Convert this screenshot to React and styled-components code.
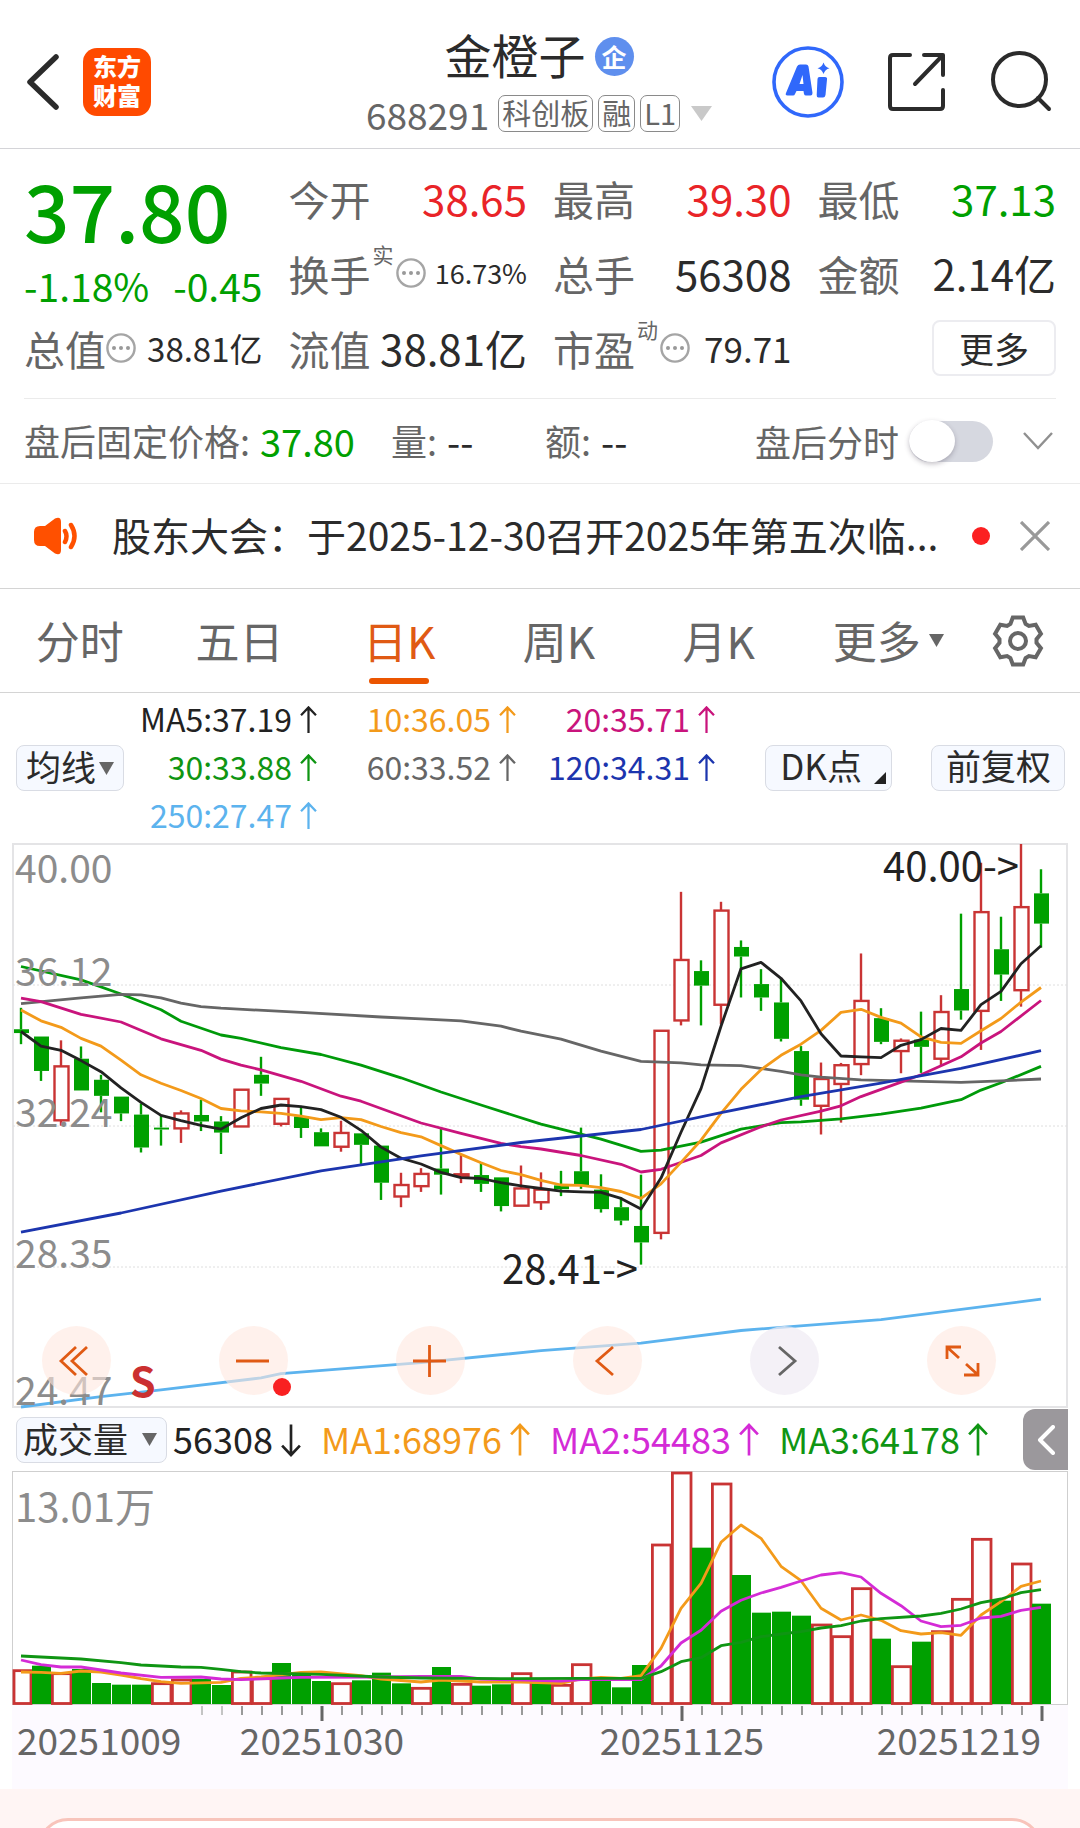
import React from 'react';
import styled, { createGlobalStyle } from 'styled-components';

const GREEN = '#00a000';
const RED = '#e92428';
const ORANGE = '#eb5500';
const INK = '#2b2b2b';
const GREY = '#666666';
const FONT = '"Noto Sans CJK SC", "Noto Sans", sans-serif';

const GlobalStyle = createGlobalStyle`
  *, *::before, *::after { box-sizing: border-box; }
  body { margin: 0; background: #fff; color: ${INK}; font-family: ${FONT}; }
  button, select, input { font: inherit; color: inherit; margin: 0; }
  svg { display: block; }
`;

const Page = styled.main`
  width: 100%;
  overflow: hidden;
`;

/* ---------- header ---------- */
const Header = styled.header`
  display: grid;
  grid-template-columns: 1fr auto 1fr;
  align-items: center;
  height: 149px;
  padding: 15px 28px 0 26px;
  border-bottom: 1px solid #d4d4d8;
`;
const HeaderSide = styled.div`
  display: flex;
  align-items: center;
  justify-content: ${(p) => (p.$end ? 'flex-end' : 'flex-start')};
  gap: ${(p) => (p.$end ? 44 : 24)}px;
`;
const IconButton = styled.button`
  display: flex;
  flex: none;
  padding: 0;
  border: 0;
  background: none;
  color: ${(p) => p.$color || INK};
`;
const Logo = styled.a`
  display: grid;
  place-content: center;
  width: 68px;
  height: 68px;
  padding-bottom: 4px;
  border-radius: 14px;
  background: #ff4a00;
  color: #fff;
  font-size: 24px;
  font-weight: 900;
  line-height: 29px;
  text-align: center;
  text-decoration: none;
`;
const TitleBlock = styled.div`
  display: flex;
  flex-direction: column;
  align-items: center;
  gap: 14px;
`;
const TitleRow = styled.div`
  display: flex;
  align-items: center;
  gap: 9px;
  height: 50px;
`;
const Title = styled.h1`
  margin: 0;
  padding-bottom: 4px;
  font-size: 47px;
  font-weight: 400;
  line-height: 48px;
`;
const Badge = styled.span`
  display: grid;
  place-content: center;
  width: 39px;
  height: 39px;
  border-radius: 50%;
  background: #5f8fee;
  color: #fff;
  font-size: 25px;
  font-weight: 700;
  line-height: 36px;
`;
const CodeRow = styled.div`
  display: flex;
  align-items: center;
  gap: 5px;
  color: ${GREY};
  line-height: 36px;
`;
const Code = styled.span`
  margin-right: 4px;
  font-size: 37px;
`;
const Tag = styled.span`
  height: 37px;
  padding: 0 3px;
  border: 1px solid #8a8a8a;
  border-radius: 7px;
  font-size: 29px;
  line-height: 32px;
`;
const CodeMenu = styled(IconButton)`
  margin-left: 6px;
`;

/* ---------- quote ---------- */
const Quote = styled.section`
  display: grid;
  grid-template-columns: repeat(4, minmax(0, 1fr));
  grid-auto-rows: 75px;
  column-gap: 26px;
  margin: 0 24px;
  padding: 11px 0 13px;
  border-bottom: 1px solid #ebebeb;
`;
const PriceCell = styled.div`
  grid-row: span 2;
  color: ${GREEN};
`;
const Price = styled.div`
  font-size: 80px;
  font-weight: 500;
  line-height: 96px;
`;
const Changes = styled.div`
  display: flex;
  justify-content: space-between;
  font-size: 39px;
  line-height: 58px;
`;
const Cell = styled.div`
  display: flex;
  align-items: center;
  white-space: nowrap;
`;
const CellLabel = styled.span`
  color: ${GREY};
  font-size: 41px;
`;
const Sup = styled.sup`
  align-self: flex-start;
  padding: 4px 2px 0;
  color: ${GREY};
  font-size: 21px;
  line-height: 30px;
`;
const CellValue = styled.span`
  margin-left: auto;
  color: ${(p) => p.$color || INK};
  font-size: ${(p) => p.$size || 42}px;
`;
const MoreButton = styled.button`
  width: 124px;
  height: 56px;
  margin-left: auto;
  padding: 0;
  border: 2px solid #ececf0;
  border-radius: 8px;
  background: #fff;
  font-size: 35px;
  line-height: 48px;
`;

/* ---------- after hours ---------- */
const AfterHours = styled.section`
  display: flex;
  align-items: center;
  gap: 36px;
  height: 85px;
  padding: 0 26px 0 24px;
  border-bottom: 1px solid #ebebeb;
  color: ${GREY};
  font-size: 36px;
  white-space: nowrap;
`;
const AfterItem = styled.div`
  display: flex;
  align-items: center;
  gap: 10px;
  min-width: 118px;
  padding-bottom: 2px;
`;
const AfterValue = styled.span`
  color: ${(p) => p.$color || INK};
  font-size: 38px;
`;
const AfterTools = styled.div`
  display: flex;
  align-items: center;
  gap: 29px;
  margin-left: auto;
`;
const SwitchLabel = styled.label`
  display: flex;
  align-items: center;
  gap: 10px;
`;
const Switch = styled.input`
  appearance: none;
  display: flex;
  align-items: center;
  width: 84px;
  height: 41px;
  border-radius: 21px;
  background: #d6d8e0;
  &::before {
    content: '';
    width: 46px;
    height: 42px;
    border-radius: 50%;
    background: #fff;
    box-shadow: 0 2px 5px rgba(60, 50, 70, 0.3);
  }
  &:checked { justify-content: flex-end; background: ${ORANGE}; }
`;

/* ---------- notice ---------- */
const Notice = styled.section`
  display: flex;
  align-items: center;
  height: 105px;
  padding: 0 30px 0 33px;
  border-bottom: 1px solid #d4d4d4;
`;
const NoticeText = styled.a`
  flex: 1;
  min-width: 0;
  margin-left: 34px;
  padding-bottom: 5px;
  overflow: hidden;
  color: ${INK};
  font-size: 39px;
  text-decoration: none;
  white-space: nowrap;
`;
const NoticeDot = styled.i`
  width: 18px;
  height: 18px;
  margin: 0 30px 0 16px;
  border-radius: 50%;
  background: #fb2021;
`;

/* ---------- tabs ---------- */
const Tabs = styled.nav`
  display: flex;
  height: 104px;
  padding-right: 22px;
  border-bottom: 1px solid #d4d4d4;
`;
const Tab = styled.button`
  display: flex;
  flex: ${(p) => (p.$wide ? 18 : 16)} 1 0;
  flex-direction: column;
  align-items: center;
  justify-content: space-between;
  padding: 15px 0 8px;
  border: 0;
  background: none;
  color: ${(p) => (p.$active ? '#e05a14' : GREY)};
  font-size: 44px;
  line-height: 72px;
  white-space: nowrap;
  &::after {
    content: '';
    width: 60px;
    height: 6px;
    border-radius: 3px;
    background: ${(p) => (p.$active ? ORANGE : 'transparent')};
  }
`;
const TabText = styled.span`
  display: flex;
  align-items: center;
  gap: 8px;
`;
const TabSettings = styled(IconButton)`
  flex: 8 1 0;
  align-items: center;
  justify-content: center;
`;

/* ---------- moving averages ---------- */
const AverageBar = styled.section`
  display: flex;
  align-items: center;
  height: 150px;
  padding: 0 15px 0 16px;
`;
const Picker = styled.div`
  display: grid;
  flex: none;
  align-items: center;
  width: ${(p) => p.$width}px;
  height: 46px;
  border: 1px solid #d9dce4;
  border-radius: 8px;
  background: #f6f9ff;
  > * { grid-area: 1 / 1; }
  > svg { justify-self: end; margin-right: 9px; pointer-events: none; }
`;
const PickerSelect = styled.select`
  appearance: none;
  width: 100%;
  height: 44px;
  padding: 0 0 4px ${(p) => p.$pad}px;
  border: 0;
  background: none;
  font-size: 35px;
  line-height: 38px;
`;
const Averages = styled.div`
  display: grid;
  grid-template-columns: repeat(3, 199px);
  grid-auto-rows: 48px;
  align-items: center;
  justify-items: end;
  margin-left: -6px;
`;
const Average = styled.span`
  display: flex;
  align-items: center;
  gap: 8px;
  color: ${(p) => p.$color};
  font-size: ${(p) => p.$size || 32}px;
  line-height: 40px;
  white-space: nowrap;
`;
const AverageText = styled.span`
  padding-bottom: 4px;
`;
const ToolButtons = styled.div`
  display: flex;
  gap: 39px;
  margin-left: auto;
`;
const ToolButton = styled.button`
  display: flex;
  align-items: flex-end;
  justify-content: center;
  gap: 12px;
  height: 46px;
  padding: 0 ${(p) => p.$right || 13}px 6px 14px;
  border: 1px solid #d9dce4;
  border-radius: 8px;
  background: #f6f9ff;
  font-size: 35px;
  line-height: 38px;
`;

/* ---------- charts ---------- */
const ChartPanel = styled.section`
  position: relative;
  margin: 0 12px;
`;
const Plot = styled.svg`
  width: 100%;
  height: auto;
  overflow: visible;
  font-family: ${FONT};
`;
const Controls = styled.div`
  position: absolute;
  left: 2.8%;
  right: 6.8%;
  bottom: 13px;
  display: flex;
  justify-content: space-between;
`;
const RoundButton = styled.button`
  display: grid;
  place-items: center;
  width: 69px;
  height: 69px;
  padding: 0;
  border: 0;
  border-radius: 50%;
  background: ${(p) => (p.$muted ? 'rgba(240, 235, 243, 0.7)' : 'rgba(255, 232, 224, 0.6)')};
  color: ${(p) => (p.$muted ? '#666' : '#e05a14')};
`;
const EventDot = styled.i`
  position: absolute;
  left: 24.7%;
  bottom: 12px;
  width: 18px;
  height: 18px;
  border-radius: 50%;
  background: #f92021;
`;
const VolumeBar = styled.div`
  display: flex;
  align-items: center;
  height: 63px;
  padding: 0 12px 0 16px;
`;
const VolumeValues = styled.div`
  display: flex;
  gap: 20px;
  margin-left: 6px;
`;
const SideTab = styled.button`
  display: grid;
  place-items: center;
  width: 45px;
  height: 61px;
  margin-left: auto;
  padding: 0;
  border: 0;
  border-radius: 12px 0 0 12px;
  background: #9b989c;
  color: #fff;
`;
const Bottom = styled.footer`
  height: 39px;
  padding: 29px 38px 0;
  overflow: hidden;
  background: #fff5f4;
`;
const BottomCard = styled.div`
  height: 70px;
  border: 3px solid #f8c4bb;
  border-radius: 30px;
  background: #fff;
`;

/* ---------- icons ---------- */
const Triangle = ({ width = 15, height = 13, color = GREY }) => (
  <svg width={width} height={height} viewBox="0 0 15 13" preserveAspectRatio="none" aria-hidden="true">
    <path d="M0 0H15L7.5 13Z" fill={color} />
  </svg>
);
const Arrow = ({ down, size = 28 }) => (
  <svg width={size > 30 ? 20 : 17} height={size} viewBox="0 0 18 30" fill="none" stroke="currentColor" strokeWidth="2.4" aria-hidden="true">
    <path d={down ? 'M9 1V28M1 20L9 28.500L17 20' : 'M9 29V2M1 10L9 1.500L17 10'} />
  </svg>
);
const Dots = () => (
  <svg width="30" height="30" viewBox="0 0 30 30" aria-hidden="true">
    <circle cx="15" cy="15" r="13.6" fill="none" stroke="#a5a5a5" strokeWidth="2.4" />
    {[8, 15, 22].map((x) => <circle key={x} cx={x} cy="15" r="2" fill="#999" />)}
  </svg>
);
const Gear = () => {
  const pts = [];
  for (let k = 0; k < 6; k += 1) {
    const base = -90 + k * 60;
    [[-24, 18.6], [-12.5, 24], [12.5, 24], [24, 18.6]].forEach(([d, r]) => {
      const a = ((base + d) * Math.PI) / 180;
      pts.push(`${(27 + r * Math.cos(a)).toFixed(1)},${(27 + r * Math.sin(a)).toFixed(1)}`);
    });
  }
  return (
    <svg width="54" height="54" viewBox="0 0 54 54" fill="none" stroke="#666" strokeWidth="4" aria-hidden="true">
      <polygon points={pts.join(' ')} />
      <circle cx="27" cy="27" r="8" />
    </svg>
  );
};

/* ---------- chart data: levels are in plot units, measured down from the top ---------- */
const CANDLES = [
  'g 518 528 462 557', 'g 537 627 537 653', 'r 615 756 547 770', 'g 595 678 563 678', 'g 650 692 637 735',
  'g 694 738 694 758', 'g 741 827 712 840', 'g 775 780 742 822', 'r 738 777 730 815', 'g 742 759 702 784',
  'g 759 788 745 844', 'r 676 772 676 772', 'g 637 660 590 692', 'r 700 765 700 772', 'g 746 776 722 802',
  'g 787 824 777 824', 'r 789 825 757 838', 'g 790 820 790 870', 'g 822 919 822 964', 'r 925 955 893 983',
  'r 896 928 881 943', 'g 882 898 775 950', 'r 897 901 845 920', 'g 899 922 868 943', 'g 905 980 905 994',
  'r 934 979 874 979', 'r 937 970 892 990', 'g 926 936 888 954', 'g 889 926 775 935', 'g 937 988 897 997',
  'g 983 1018 957 1030', 'g 1032 1075 898 1133', 'r 522 1050 522 1067', 'r 337 495 159 508', 'g 366 404 338 508',
  'r 208 454 185 505', 'g 303 328 286 435', 'g 400 435 361 470', 'g 448 543 385 550', 'g 575 702 562 718',
  'r 648 718 605 793', 'r 612 661 606 762', 'r 444 609 320 638', 'g 489 551 463 557', 'r 548 575 542 633',
  'g 545 564 472 632', 'r 473 595 429 612', 'g 413 469 216 493', 'r 212 470 83 572', 'g 309 375 224 444',
  'r 199 416 34 459', 'g 163 242 100 305',
].map((row) => {
  const [kind, ...v] = row.split(' ');
  const [top, bottom, high, low] = v.map(Number);
  return { up: kind === 'r', top, bottom, high, low };
});

const PRICE_LINES = [
  ['#5cb3ee', '0:1505 4:1478 7:1460 12:1429 13:1418 20:1389 26:1358 31:1338 36:1305 38:1297 43:1277 51:1223'],
  ['#009a0a', '0:354 3:389 5:426 7:467 8:497 10:533 11:542 13:566 15:584 17:612 19:645 21:682 23:716 26:766 29:805 31:837 32:834 34:813 36:779 38:762 39:760 41:752 43:740 45:724 47:702 48:677 49:658 51:615'],
  ['#666666', '0:451 3:436 5:427 6:428 7:436 8:450 9:459 10:463 14:474 18:486 20:491 22:496 24:510 25:523 27:544 29:575 31:602 33:606 34:611 36:613 38:628 39:637 40:643 42:650 44:653 47:657 49:653 51:648'],
  ['#c9147c', '0:437 1:446 3:479 5:499 7:543 9:573 10:596 11:612 12:624 14:654 16:693 17:706 19:744 20:763 22:790 24:816 25:825 26:831 28:848 30:871 31:891 32:884 34:848 35:815 37:773 38:755 40:732 41:718 42:694 44:656 45:637 47:590 48:554 49:524 51:443'],
  ['#f39a1a', '0:468 1:496 2:513 3:542 4:562 5:599 6:637 7:659 8:678 9:699 10:725 11:731 12:734 13:738 14:745 15:754 16:749 17:754 18:772 19:788 20:799 21:822 22:845 23:867 24:887 25:898 26:913 27:925 28:926 29:932 30:942 31:960 32:922 33:866 34:808 35:738 36:675 37:624 38:586 39:557 40:521 41:474 42:466 43:487 44:502 45:538 46:552 47:555 48:522 49:490 50:447 51:409'],
  ['#222222', '0:524 1:562 2:573 3:600 4:629 5:671 6:709 7:743 8:757 9:769 10:779 11:749 12:725 13:716 14:720 15:728 16:748 17:782 18:826 19:855 20:870 21:892 22:906 23:908 24:919 25:927 26:934 27:941 28:943 29:944 30:960 31:988 32:907 33:787 34:673 35:510 36:360 37:343 38:385 39:444 40:530 41:588 42:590 43:592 44:560 45:545 46:516 47:521 48:454 49:419 50:347 51:300'],
  ['#1c35ae', '0:1048 5:998 10:941 15:888 20:849 25:814 28:797 31:780 35:736 39:694 43:659 47:620 51:574'],
];

const VOLUMES = 'r804 g792 r813 g802 g844 g849 g849 r843 r832 g832 g850 r808 r828 g784 g812 g838 r843 g836 g813 g845 r857 g796 r845 g852 g848 r813 g845 r848 r786 g836 g857 g790 r427 r211 g438 r244 g520 g633 g630 g642 r667 r702 r558 g711 r792 g720 r687 r590 r410 g597 r484 g606'
  .split(' ')
  .map((v) => ({ up: v[0] === 'r', top: Number(v.slice(1)) }));

const VOLUME_LINES = [
  ['#f39a1a', '0:811 1:812 2:815 3:808 4:811 5:820 6:831 7:840 8:845 10:842 11:830 12:826 14:812 15:811 17:822 18:832 20:841 21:835 23:841 25:841 27:845 28:832 29:827 30:830 31:822 32:740 33:620 34:545 35:422 36:370 37:410 38:494 39:537 40:620 41:655 42:640 43:656 44:687 45:697 46:693 47:701 48:640 49:600 50:554 51:538'],
  ['#d42bd6', '0:775 1:789 2:796 3:796 5:814 7:827 9:826 10:832 11:834 13:829 14:827 18:826 20:824 22:824 23:832 27:838 28:834 31:834 32:793 33:724 34:686 35:629 36:596 37:574 38:557 39:538 40:520 41:513 42:526 43:575 44:612 45:658 46:675 47:671 48:649 49:644 50:626 51:617'],
  ['#0f9513', '0:763 3:772 5:783 6:790 8:796 9:797 10:803 11:810 12:814 15:818 18:826 20:829 24:831 28:830 31:830 32:810 33:780 34:768 35:732 36:722 37:705 38:697 39:690 40:679 41:672 42:658 43:651 45:643 46:635 47:622 48:603 49:592 50:573 51:564'],
];

const cx = (i) => 9 + i * 20;
const priceY = (v) => ((v - 34) * 563) / 1471 + 1;
const volumeY = (v) => (v - 211) / 3 + 1;
const toPoints = (text, scale) =>
  text
    .split(' ')
    .map((pair) => pair.split(':').map(Number))
    .map(([i, v]) => `${cx(i)},${scale(v).toFixed(1)}`)
    .join(' ');

const BAR_RED = '#c93434';

function PriceChart() {
  return (
    <Plot viewBox="0 0 1056 565" role="img" aria-label="日K">
      <rect x="1" y="1" width="1054" height="563" fill="none" stroke="#e4e4e6" strokeWidth="2" />
      {[142, 283, 424].map((y) => (
        <line key={y} x1="1" x2="1055" y1={y} y2={y} stroke="#dedede" strokeWidth="1" strokeDasharray="2 2" />
      ))}
      {CANDLES.map((c, i) => {
        const x = cx(i);
        const color = c.up ? BAR_RED : GREEN;
        return (
          <g key={i} stroke={color} strokeWidth="2.4">
            <line x1={x} x2={x} y1={priceY(c.high)} y2={priceY(c.top)} />
            <line x1={x} x2={x} y1={priceY(c.bottom)} y2={priceY(c.low)} />
            {c.up ? (
              <rect x={x - 6.5} y={priceY(c.top)} width="14" height={priceY(c.bottom) - priceY(c.top)} fill="#fff" />
            ) : (
              <rect x={x - 7} y={priceY(c.top)} width="15" height={priceY(c.bottom) - priceY(c.top)} fill={GREEN} stroke="none" />
            )}
          </g>
        );
      })}
      {PRICE_LINES.map(([color, text]) => (
        <polyline key={color} points={toPoints(text, priceY)} fill="none" stroke={color} strokeWidth="2.8" strokeLinejoin="round" />
      ))}
      <g fontSize="39" fill="#8c8c8c">
        <text x="3" y="40">40.00</text>
        <text x="3" y="143">36.12</text>
        <text x="3" y="284">32.24</text>
        <text x="3" y="425">28.35</text>
        <text x="3" y="562">24.47</text>
      </g>
      <g fontSize="40" fill="#222" textAnchor="end">
        <text x="1007" y="38">40.00-&gt;</text>
        <text x="626" y="441">28.41-&gt;</text>
      </g>
      <text x="118" y="554" fontSize="41" fontWeight="700" fill="#cb3030">S</text>
    </Plot>
  );
}

function VolumeChart() {
  return (
    <Plot viewBox="0 0 1056 318" role="img" aria-label="成交量">
      <rect x="0" y="234" width="1056" height="84" fill="#fdfaff" />
      <rect x="0.5" y="0.5" width="1055" height="233" fill="#fff" stroke="#cfcfcf" />
      {VOLUMES.map((b, i) => {
        const right = cx(i) + 10;
        const left = Math.max(cx(i) - 8.6, 2);
        const y = volumeY(b.top);
        return b.up ? (
          <rect key={i} x={left} y={y + 1} width={right - left} height={231.5 - y} fill="#fff" stroke={BAR_RED} strokeWidth="2.8" />
        ) : (
          <rect key={i} x={right - 19} y={y} width="19" height={233 - y} fill={GREEN} />
        );
      })}
      {VOLUME_LINES.map(([color, text]) => (
        <polyline key={color} points={toPoints(text, volumeY)} fill="none" stroke={color} strokeWidth="2.8" strokeLinejoin="round" />
      ))}
      {VOLUMES.map((_, i) => {
        if (i < 9) return null;
        const major = i === 15 || i === 33 || i === 51;
        return (
          <line
            key={i}
            x1={cx(i) + 1}
            x2={cx(i) + 1}
            y1="235"
            y2={major ? 250 : 244}
            stroke={i < 11 ? '#c4c4c4' : major ? '#666' : '#999'}
            strokeWidth={major ? 3 : 2}
          />
        );
      })}
      <text x="3" y="51" fontSize="40" fill="#8c8c8c">13.01万</text>
      <g fontSize="37" fill={GREY}>
        <text x="5" y="284">20251009</text>
        <text x="310" y="284" textAnchor="middle">20251030</text>
        <text x="670" y="284" textAnchor="middle">20251125</text>
        <text x="1029" y="284" textAnchor="end">20251219</text>
      </g>
    </Plot>
  );
}

const CONTROLS = [
  ['最早', <path key="p" d="M18 4L3 18L18 32M29 4L14 18L29 32" />],
  ['缩小', <path key="p" d="M1 18H34" />],
  ['放大', <path key="p" d="M1 18H34M17.500 2V34" />],
  ['左移', <path key="p" d="M24 4L8 18L24 32" />],
  ['右移', <path key="p" d="M12 4L28 18L12 32" />],
  ['全屏', <path key="p" d="M3 16V4H17M4 5L15 15M34 20V32H20M33 31L22 21" />],
];

const AVERAGES = [
  ['MA5:37.19', '#222'], ['10:36.05', '#f39a1a'], ['20:35.71', '#c9147c'],
  ['30:33.88', '#0f9513'], ['60:33.52', '#666'], ['120:34.31', '#1c35ae'],
  ['250:27.47', '#5cb3ee'],
];

const VOLUME_AVERAGES = [
  ['56308', '#222', true], ['MA1:68976', '#f39a1a'], ['MA2:54483', '#d42bd6'], ['MA3:64178', '#0f9513'],
];

const TABS = ['分时', '五日', '日K', '周K', '月K', '更多'];

export default function App() {
  return (
    <Page>
      <GlobalStyle />
      <Header>
        <HeaderSide>
          <IconButton aria-label="返回">
            <svg width="33" height="56" viewBox="0 0 33 56" fill="none" stroke="currentColor" strokeWidth="5.500" strokeLinecap="round" strokeLinejoin="round">
              <path d="M30 3L4 28L30 53" />
            </svg>
          </IconButton>
          <Logo href="#home">
            <span>东方</span>
            <span>财富</span>
          </Logo>
        </HeaderSide>
        <TitleBlock>
          <TitleRow>
            <Title>金橙子</Title>
            <Badge>企</Badge>
          </TitleRow>
          <CodeRow>
            <Code>688291</Code>
            <Tag>科创板</Tag>
            <Tag>融</Tag>
            <Tag>L1</Tag>
            <CodeMenu aria-label="展开">
              <Triangle width={21} height={15} color="#c9c9c9" />
            </CodeMenu>
          </CodeRow>
        </TitleBlock>
        <HeaderSide $end>
          <IconButton aria-label="Ai" $color="#3068fb">
            <svg width="72" height="72" viewBox="0 0 72 72" fill="none" stroke="currentColor">
              <circle cx="36" cy="36" r="34" strokeWidth="3.6" />
              <path fillRule="evenodd" d="M25 20.500Q26 18.500 28 18.500H34Q36 18.500 36.500 20.500L40.500 47Q40.500 49.500 38.500 49.500H34Q32.500 49.500 32 48L31.500 45H24.500L23 48Q22.500 49.500 21 49.500H15.500Q13 49.500 14 47ZM30.500 29L27.500 38H31.500Z" fill="currentColor" stroke="none" />
              <path d="M47.500 31H53Q55.500 31 55 33.500L53.500 49Q53 51.500 51 51.500H46.500Q44.500 51.500 44.700 49L45.500 33Q45.500 31 47.500 31Z" fill="currentColor" stroke="none" />
              <path d="M51.500 16.500Q53 21 57.500 22.300Q53 23.500 51.500 28Q50 23.500 45.500 22.300Q50 21 51.500 16.500Z" fill="currentColor" stroke="none" />
            </svg>
          </IconButton>
          <IconButton aria-label="分享">
            <svg width="58" height="60" viewBox="0 0 58 60" fill="none" stroke="currentColor" strokeWidth="4" strokeLinecap="round" strokeLinejoin="round">
              <path d="M22 3H5Q2 3 2 6V54Q2 57 5 57H52Q55 57 55 54V38M36 3H55V23M54 4L27 32" />
            </svg>
          </IconButton>
          <IconButton aria-label="搜索">
            <svg width="62" height="62" viewBox="0 0 62 62" fill="none" stroke="currentColor" strokeWidth="4" strokeLinecap="round">
              <circle cx="29.500" cy="28.500" r="26.500" />
              <path d="M48 47L59 58" />
            </svg>
          </IconButton>
        </HeaderSide>
      </Header>

      <Quote>
        <PriceCell>
          <Price>37.80</Price>
          <Changes>
            <span>-1.18%</span>
            <span>-0.45</span>
          </Changes>
        </PriceCell>
        <Cell><CellLabel>今开</CellLabel><CellValue $color={RED}>38.65</CellValue></Cell>
        <Cell><CellLabel>最高</CellLabel><CellValue $color={RED}>39.30</CellValue></Cell>
        <Cell><CellLabel>最低</CellLabel><CellValue $color={GREEN}>37.13</CellValue></Cell>
        <Cell><CellLabel>换手</CellLabel><Sup>实</Sup><Dots /><CellValue $size={27}>16.73%</CellValue></Cell>
        <Cell><CellLabel>总手</CellLabel><CellValue>56308</CellValue></Cell>
        <Cell><CellLabel>金额</CellLabel><CellValue>2.14亿</CellValue></Cell>
        <Cell><CellLabel>总值</CellLabel><Dots /><CellValue $size={33}>38.81亿</CellValue></Cell>
        <Cell><CellLabel>流值</CellLabel><CellValue>38.81亿</CellValue></Cell>
        <Cell><CellLabel>市盈</CellLabel><Sup>动</Sup><Dots /><CellValue $size={35}>79.71</CellValue></Cell>
        <Cell><MoreButton>更多</MoreButton></Cell>
      </Quote>

      <AfterHours>
        <AfterItem>盘后固定价格: <AfterValue $color={GREEN}>37.80</AfterValue></AfterItem>
        <AfterItem>量: <AfterValue>--</AfterValue></AfterItem>
        <AfterItem>额: <AfterValue>--</AfterValue></AfterItem>
        <AfterTools>
          <SwitchLabel>
            盘后分时
            <Switch type="checkbox" role="switch" />
          </SwitchLabel>
          <IconButton aria-label="展开盘后" $color="#909090">
            <svg width="32" height="20" viewBox="0 0 32 20" fill="none" stroke="currentColor" strokeWidth="2.4">
              <path d="M2 2L16 17L30 2" />
            </svg>
          </IconButton>
        </AfterTools>
      </AfterHours>

      <Notice>
        <svg width="45" height="38" viewBox="0 0 45 38" fill="none" stroke="#ff5000" strokeWidth="4.500" strokeLinecap="round" aria-hidden="true">
          <path d="M7 9H12L22 1.500Q28 -1 28 5V33Q28 39 22 36.500L12 29H7Q1 29 1 23V15Q1 9 7 9Z" fill="#ff5000" stroke="none" />
          <path d="M32 14Q35 19 32 25M38 8Q45 19 38 30" />
        </svg>
        <NoticeText href="#notice">股东大会：于2025-12-30召开2025年第五次临...</NoticeText>
        <NoticeDot />
        <IconButton aria-label="关闭" $color="#999">
          <svg width="30" height="30" viewBox="0 0 30 30" fill="none" stroke="currentColor" strokeWidth="3.200">
            <path d="M1 1L29 29M29 1L1 29" />
          </svg>
        </IconButton>
      </Notice>

      <Tabs>
        {TABS.map((name) => (
          <Tab key={name} $active={name === '日K'} $wide={name === '更多'}>
            <TabText>
              {name}
              {name === '更多' && <Triangle />}
            </TabText>
          </Tab>
        ))}
        <TabSettings aria-label="设置"><Gear /></TabSettings>
      </Tabs>

      <AverageBar>
        <Picker $width={108}>
          <PickerSelect aria-label="主图指标" $pad={9}>
            <option>均线</option>
          </PickerSelect>
          <Triangle />
        </Picker>
        <Averages>
          {AVERAGES.map(([text, color]) => (
            <Average key={text} $color={color}>
              <AverageText>{text}</AverageText>
              <Arrow />
            </Average>
          ))}
        </Averages>
        <ToolButtons>
          <ToolButton $right={5}>
            DK点
            <svg width="12" height="12" viewBox="0 0 12 12" aria-hidden="true"><path d="M12 0V12H0Z" fill="#222" /></svg>
          </ToolButton>
          <ToolButton>前复权</ToolButton>
        </ToolButtons>
      </AverageBar>

      <ChartPanel>
        <PriceChart />
        <Controls>
          {CONTROLS.map(([label, shape]) => (
            <RoundButton key={label} aria-label={label} $muted={label === '右移'}>
              <svg width="36" height="36" viewBox="0 0 36 36" fill="none" stroke="currentColor" strokeWidth="2.800">
                {shape}
              </svg>
            </RoundButton>
          ))}
        </Controls>
        <EventDot />
      </ChartPanel>

      <VolumeBar>
        <Picker $width={151}>
          <PickerSelect aria-label="副图指标" $pad={6}>
            <option>成交量</option>
          </PickerSelect>
          <Triangle />
        </Picker>
        <VolumeValues>
          {VOLUME_AVERAGES.map(([text, color, down]) => (
            <Average key={text} $size={36} $color={color}>
              <AverageText>{text}</AverageText>
              <Arrow down={down} size={34} />
            </Average>
          ))}
        </VolumeValues>
        <SideTab aria-label="展开侧栏">
          <svg width="18" height="30" viewBox="0 0 18 30" fill="none" stroke="currentColor" strokeWidth="4" strokeLinecap="round" strokeLinejoin="round">
            <path d="M16 2L3 15L16 28" />
          </svg>
        </SideTab>
      </VolumeBar>

      <ChartPanel>
        <VolumeChart />
      </ChartPanel>

      <Bottom>
        <BottomCard />
      </Bottom>
    </Page>
  );
}
